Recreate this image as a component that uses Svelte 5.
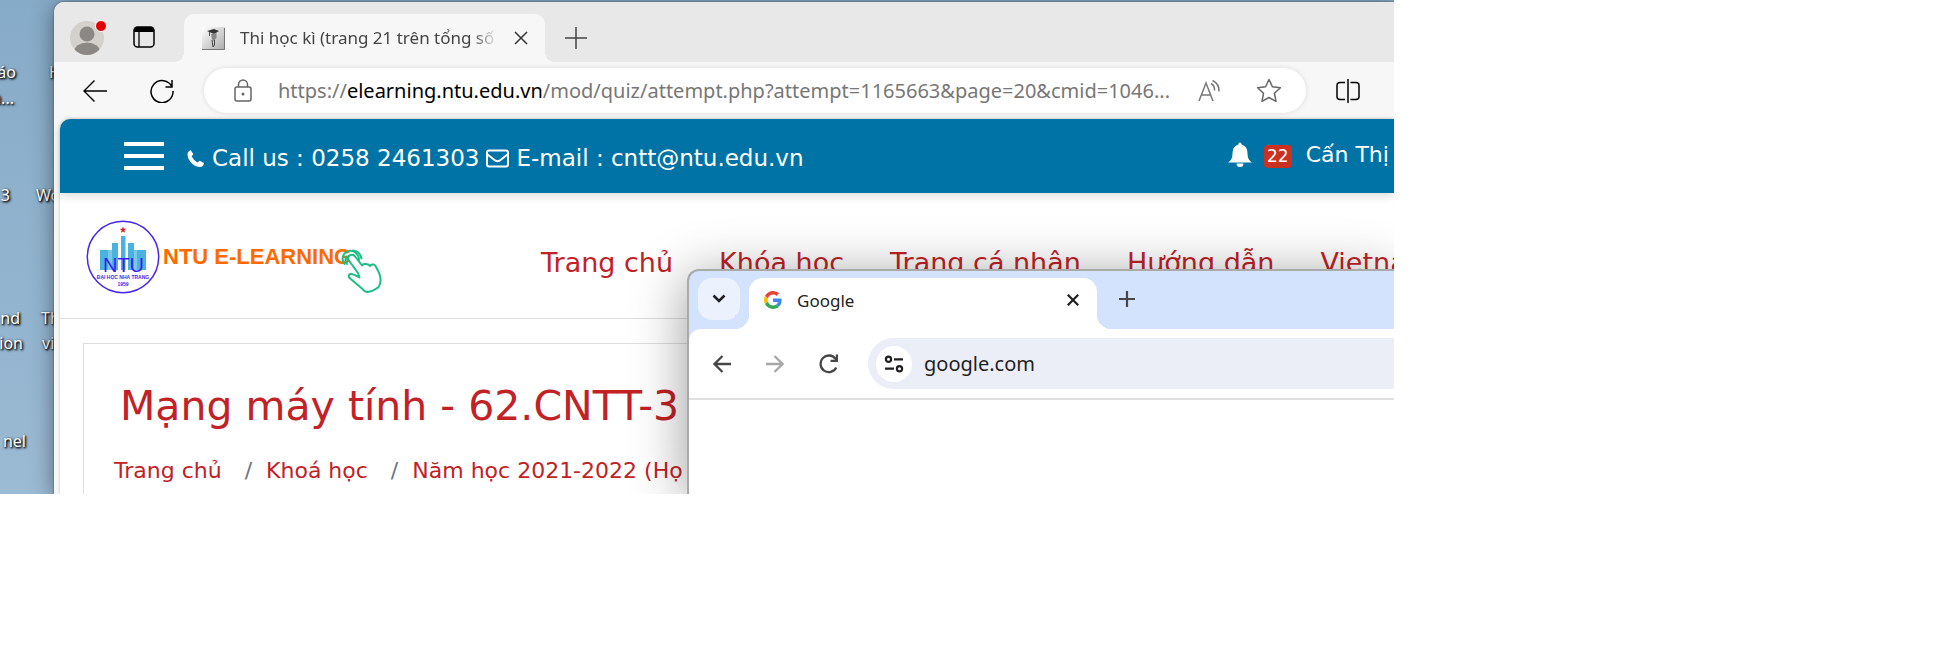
<script>
  const icons = [
    { text: 'áo', right: 16, top: 60 },
    { text: 'n...', right: 14, top: 86 },
    { text: '3', right: 10, top: 183 },
    { text: 'nd', right: 20, top: 306 },
    { text: 'ion', right: 23, top: 331 },
    { text: 'nel', right: 26, top: 429 },
  ];
  const cut = [
    { text: 'H', left: 49, top: 60 },
    { text: 'Wo', left: 36, top: 183 },
    { text: 'Th', left: 41, top: 306 },
    { text: 'vi', left: 42, top: 331 },
  ];
  const nav = ['Trang chủ', 'Khóa học', 'Trang cá nhân', 'Hướng dẫn', 'Vietna'];
  const crumbs = ['Trang chủ', 'Khoá học', 'Năm học 2021-2022 (Họ'];
</script>

<main>
  <div class="desktop">
    {#each icons as i}
      <span class="label ends" style="width:{i.right}px; top:{i.top}px">{i.text}</span>
    {/each}
    {#each cut as i}
      <span class="label" style="left:{i.left}px; top:{i.top}px">{i.text}</span>
    {/each}

    <section class="edge">
      <div class="strip">
        <button class="avatar" aria-label="Profile">
          <svg width="38" height="38" viewBox="0 0 38 38">
            <defs><clipPath id="face"><circle cx="17" cy="21" r="17" /></clipPath></defs>
            <circle cx="17" cy="21" r="17" fill="#d4d1cd" />
            <g clip-path="url(#face)" fill="#8b8784">
              <circle cx="17" cy="17" r="7.5" />
              <ellipse cx="17" cy="35" rx="13" ry="9.5" />
            </g>
            <circle cx="31" cy="9" r="5.5" fill="#e30000" stroke="#fff" />
          </svg>
        </button>
        <button class="spaces" aria-label="Workspaces">
          <svg width="22" height="22" viewBox="0 0 22 22">
            <rect x="1" y="1" width="20" height="20" rx="3.5" fill="none" stroke="#000" stroke-width="1.5" />
            <path d="M1 6V4a3 3 0 0 1 3-3h14a3 3 0 0 1 3 3v2z" />
            <path d="M6 6v15" stroke="#000" stroke-width="1.3" />
          </svg>
        </button>
        <div class="tab">
          <svg width="23" height="23" viewBox="0 0 23 23">
            <defs><linearGradient id="pic" x1="0" y1="0" x2="1" y2="1"><stop offset="0" stop-color="#fff" /><stop offset="1" stop-color="#aaa" /></linearGradient></defs>
            <rect width="23" height="23" rx="1" fill="url(#pic)" />
            <path d="M0 22.5h22.5V1" fill="none" stroke="#777" />
            <path d="M5 4l7-2 5 2-5 3z" fill="#333" />
            <path d="M7.500 5v4" stroke="#555" />
            <path d="M9 7l1 5 1.500 2 3-3V6z" fill="#888" />
            <path d="M10 13l1 7 1.500-2V13" fill="none" stroke="#444" />
          </svg>
          <span class="tabtitle">Thi học kì (trang 21 trên tổng số</span>
          <button class="x" aria-label="Close tab">
            <svg width="14" height="14" viewBox="0 0 14 14"><path d="M1 1l12 12M13 1L1 13" stroke="#333" stroke-width="1.500" /></svg>
          </button>
        </div>
        <button class="plus" aria-label="New tab">
          <svg width="22" height="22" viewBox="0 0 22 22"><path d="M11 0v22M0 11h22" stroke="#444" stroke-width="1.500" /></svg>
        </button>
      </div>

      <div class="tools">
        <button class="back" aria-label="Back">
          <svg width="24" height="24" viewBox="0 0 24 24"><path d="M11.500 1.500L1 12l10.500 10.500M1 12h23" fill="none" stroke="#000" stroke-width="1.400" /></svg>
        </button>
        <button class="reload" aria-label="Refresh">
          <svg width="24" height="24" viewBox="0 0 24 24"><path d="M22 8A11 11 0 1 0 23 12M22 1v7h-6.500" fill="none" stroke="#000" stroke-width="1.500" /></svg>
        </button>
        <div class="address">
          <svg class="lock" width="18" height="24" viewBox="0 0 18 24"><rect x="1" y="8" width="16" height="14" rx="2" fill="none" stroke="#666" stroke-width="1.500" /><path d="M4.500 8V5.500a4.500 4.500 0 0 1 9 0V8" fill="none" stroke="#666" stroke-width="1.500" /><circle cx="9" cy="15" r="1.500" fill="#666" /></svg>
          <a class="url" href="#top">https://<b>elearning.ntu.edu.vn</b>/mod/quiz/attempt.php?attempt=1165663&amp;page=20&amp;cmid=1046...</a>
          <button aria-label="Read aloud">
            <svg width="24" height="24" viewBox="0 0 24 24" fill="none" stroke="#777" stroke-width="1.500"><path d="M1 22L8 4l7 18M3.500 16h9M13 4.500q4 2.500 3.500 7M14.500 1.500q7 3.500 6.500 11" /></svg>
          </button>
          <button class="star" aria-label="Favourite">
            <svg width="26" height="26" viewBox="0 0 26 26"><path d="M13 1.500l3.400 7.300 8 1-5.900 5.500 1.500 8L13 19.500l-7 3.800 1.500-8L1.600 9.800l8-1z" fill="none" stroke="#666" stroke-width="1.500" stroke-linejoin="round" /></svg>
          </button>
        </div>
        <button class="split" aria-label="Split screen">
          <svg width="24" height="24" viewBox="0 0 24 24" fill="none" stroke="#000" stroke-width="1.500"><path d="M9 3.500H4a3 3 0 0 0-3 3v11a3 3 0 0 0 3 3h5M12 0v24M14.500 3.500H20a3 3 0 0 1 3 3v11a3 3 0 0 1-3 3h-5.500" /></svg>
        </button>
      </div>

      <div class="page">
        <div class="bar">
          <button class="burger" aria-label="Menu"><i></i><i></i><i></i></button>
          <div class="contact">
            <svg width="18" height="19" viewBox="0 0 19 19"><path d="M4 .7L6.700 5 4.800 7.200q2 4.300 6.300 6.500L13.300 11.800 18 14.300q-.5 4-4.500 4.200Q7.500 18 3.500 13 .2 9 .5 5 .8 1.500 4 .7z" fill="#fff" /></svg>
            <span>Call us : 0258 2461303</span>
            <svg width="23" height="19" viewBox="0 0 23 19" fill="none" stroke="#fff" stroke-width="2"><rect x="1" y="1.500" width="21" height="16" rx="2" /><path d="M1.500 5.500l8 6.200q2 1.300 4 0l8-6.200" /></svg>
            <span>E-mail : cntt@ntu.edu.vn</span>
          </div>
          <div class="user">
            <svg width="24" height="26" viewBox="0 0 24 26"><path d="M12 .5q1.500 0 1.500 2 6 1.500 6 9 0 6.500 4.500 9H0q4.500-2.500 4.500-9 0-7.500 6-9 0-2 1.500-2zM8.500 21.500h7a3.500 3.500 0 0 1-7 0z" fill="#fff" /></svg>
            <span class="badge">22</span>
            <span class="name">Cấn Thị</span>
          </div>
        </div>

        <header>
          <svg class="logo" width="300" height="76" viewBox="0 0 300 76">
            <circle cx="37" cy="38" r="35.700" fill="#fff" stroke="#4a25ea" stroke-width="1.500" />
            <path d="M37 7.500l.9 2.300h2.300l-1.800 1.600.7 2.400-2.100-1.400-2.100 1.400.7-2.400-1.800-1.600h2.300z" fill="#e02020" />
            <path d="M14 31h8v20h-8zM26 24h6v27h-6zM35 17h4.500v34H35zM42 24h6v27h-6zM51 31h9v20h-9z" fill="#49b2df" />
            <path d="M22 31h4v20h-4zM48 31h3v20h-3z" fill="#7cc8e8" />
            <text x="37.500" y="53" text-anchor="middle" class="mark">NTU</text>
            <text x="37" y="60" text-anchor="middle" class="tiny">ĐẠI HỌC NHA TRANG</text>
            <text x="37" y="67" text-anchor="middle" class="tiny">1959</text>
            <text x="77" y="45" class="word">NTU E-LEARNING</text>
            <g fill="none" stroke="#1bbf83" stroke-width="2" stroke-linecap="round" stroke-linejoin="round">
              <path d="M272 54L262.500 41q-1-4 2-5 3-1 5 2l6.500 8.500q1-2 4-1.500 2.500 0 4 2 1-2 3.500-1.500 2 .5 2.500 2.500 5 8 4.500 14-.5 6-4 7.500-4 3-9 3.500-3 0-5-3L263 58.500q-1-2.500 1.500-3.500 2-.5 9 3.500z" fill="#fff" />
              <path d="M258.500 45q-4-5 0-10.500 5-4.500 10.500-1.500 4 3 4 8M261 45q-3-4 0-7.500" />
              <path d="M267 31.500q7 1 8.500 8" />
            </g>
          </svg>
          <nav>
            {#each nav as n}<a href="#top">{n}</a>{/each}
          </nav>
        </header>

        <div class="card">
          <h1>Mạng máy tính - 62.CNTT-3</h1>
          <ol>
            {#each crumbs as c}<li><a href="#top">{c}</a></li>{/each}
          </ol>
        </div>
      </div>
    </section>

    <section class="chrome">
      <div class="cstrip">
        <button class="search" aria-label="Search tabs">
          <svg width="14" height="10" viewBox="0 0 14 10"><path d="M1.500 1.500L7 7l5.500-5.500" fill="none" stroke="#1f1f1f" stroke-width="2.500" /></svg>
        </button>
        <div class="ctab">
          <svg width="18" height="18" viewBox="0 0 48 48">
            <path fill="#EA4335" d="M24 9.500c3.540 0 6.710 1.220 9.210 3.600l6.850-6.850C35.900 2.380 30.470 0 24 0 14.620 0 6.510 5.380 2.560 13.220l7.980 6.190C12.430 13.720 17.740 9.500 24 9.500z" />
            <path fill="#4285F4" d="M46.980 24.550c0-1.570-.15-3.090-.38-4.550H24v9.020h12.940c-.58 2.960-2.260 5.480-4.780 7.180l7.730 6c4.510-4.180 7.090-10.360 7.090-17.650z" />
            <path fill="#FBBC05" d="M10.530 28.590c-.48-1.450-.76-2.990-.76-4.590s.27-3.140.76-4.590l-7.980-6.190C.92 16.460 0 20.120 0 24c0 3.880.92 7.540 2.560 10.780l7.970-6.190z" />
            <path fill="#34A853" d="M24 48c6.480 0 11.930-2.130 15.890-5.810l-7.730-6c-2.150 1.450-4.920 2.300-8.160 2.300-6.260 0-11.570-4.220-13.470-9.910l-7.980 6.190C6.510 42.620 14.620 48 24 48z" />
          </svg>
          <span>Google</span>
          <button aria-label="Close tab">
            <svg width="12" height="12" viewBox="0 0 12 12"><path d="M.7.7l10.600 10.600M11.300.7L.7 11.300" stroke="#1f1f1f" stroke-width="2.200" /></svg>
          </button>
        </div>
        <button class="cplus" aria-label="New tab">
          <svg width="16" height="16" viewBox="0 0 16 16"><path d="M8 0v16M0 8h16" stroke="#474747" stroke-width="2.200" /></svg>
        </button>
      </div>
      <div class="cbody">
        <div class="ctools">
          <button aria-label="Back"><svg width="18" height="18" viewBox="0 0 18 18"><path d="M9.500 1L1.500 9l8 8M1.500 9H18" fill="none" stroke="#474747" stroke-width="2.300" /></svg></button>
          <button aria-label="Forward"><svg width="18" height="18" viewBox="0 0 18 18"><path d="M8.500 1l8 8-8 8M16.500 9H0" fill="none" stroke="#a8a8a8" stroke-width="2.300" /></svg></button>
          <button aria-label="Reload"><svg width="20" height="20" viewBox="0 0 20 20"><path d="M17.300 13.500A8.300 8.300 0 1 1 16.500 4.800L18 7" fill="none" stroke="#474747" stroke-width="2.300" /><path d="M19 .5V8h-7.500V5.800h5.300V.5z" fill="#474747" /></svg></button>
          <div class="omni">
            <button class="site" aria-label="Site information">
              <svg width="20" height="18" viewBox="0 0 20 18" fill="none" stroke="#1f1f1f" stroke-width="2.200"><circle cx="4.500" cy="4.300" r="2.600" /><path d="M10 4.300h9M1 13.700h9" /><circle cx="15.500" cy="13.700" r="2.600" /></svg>
            </button>
            <input aria-label="Address" value="google.com" />
          </div>
        </div>
      </div>
    </section>
  </div>
</main>

<style>
  :global(body) { margin: 0; background: #fff; }
  main { display: grid; grid-template-columns: minmax(0, 1394fr) 549fr; }
  button { border: 0; padding: 0; background: none; display: flex; align-items: center; justify-content: center; flex: none; }
  svg { display: block; flex: none; }
  a { color: inherit; text-decoration: none; }
  .desktop { position: relative; overflow: hidden; background: linear-gradient(#86abc8, #9bbad3); padding: 2px 0 0 54px; font-family: "Noto Sans", sans-serif; }
  .label { position: absolute; color: #fff; font-size: 16px; line-height: 24px; white-space: nowrap; text-shadow: 1px 1px 2px #000, 1px 1px 3px #000; }
  .ends { left: 0; display: flex; justify-content: flex-end; }

  .edge { position: relative; background: #f7f7f7; border-top-left-radius: 10px; box-shadow: 0 0 2px #444, 0 4px 22px rgba(0, 0, 0, .45); }
  .strip { display: flex; height: 60px; background: #e8e8e8; border-top-left-radius: 10px; }
  .avatar { margin: 12px 0 0 16px; align-self: flex-start; }
  .avatar, .spaces { height: 44px; }
  .spaces { margin: 13px 0 0 25px; }
  .tab { position: relative; display: flex; align-items: center; box-sizing: border-box; width: 361px; margin: 12px 0 0 29px; padding: 0 17px 0 18px; background: #f7f7f7; border-radius: 10px 10px 0 0; }
  .tab::before, .tab::after, .ctab::before, .ctab::after { content: ""; position: absolute; bottom: 0; width: 10px; height: 10px; }
  .tab::before { left: -10px; background: radial-gradient(circle at 0 0, #e8e8e8 10px, #f7f7f7 10px); }
  .tab::after { right: -10px; background: radial-gradient(circle at 100% 0, #e8e8e8 10px, #f7f7f7 10px); }
  .tabtitle { flex: 1; min-width: 0; margin: 0 16px 0 15px; overflow: hidden; white-space: nowrap; font-size: 17px; line-height: 24px; color: #444; mask-image: linear-gradient(90deg, #000 90%, transparent); }
  .plus { margin: 11px 0 0 20px; }

  .tools { display: flex; align-items: center; height: 45px; padding: 6px 34px 6px 29px; }
  .reload { margin-left: 43px; }
  .address { flex: 1; min-width: 0; display: flex; align-items: center; height: 45px; box-sizing: border-box; margin: 0 30px; padding: 0 24px 0 30px; background: #fff; border-radius: 23px; box-shadow: 0 0 5px rgba(0, 0, 0, .12); }
  .url { flex: 1; min-width: 0; margin-left: 26px; overflow: hidden; white-space: nowrap; font-size: 20px; line-height: 30px; color: #777; }
  .url b { font-weight: 400; color: #000; }
  .star { margin-left: 34px; }

  .page { margin-left: 6px; background: #fff; border-top-left-radius: 10px; font-family: "DejaVu Sans", Verdana, sans-serif; box-shadow: 0 0 3px rgba(0, 0, 0, .25); }
  .bar { position: relative; display: flex; align-items: center; height: 74px; padding-left: 64px; background: #0073a6; color: #fff; border-top-left-radius: 10px; box-shadow: 0 3px 9px rgba(0, 0, 0, .14); font-size: 22px; line-height: 28px; white-space: nowrap; }
  .burger { flex-direction: column; gap: 8px; }
  .burger i { width: 40px; height: 4px; background: #fff; }
  .contact { display: flex; align-items: center; gap: 7px; margin-left: 23px; padding-top: 4px; font-size: 23px; }
  .user { display: flex; align-items: center; margin-left: auto; width: 166px; padding-bottom: 2px; overflow: hidden; }
  .badge { margin: 2px 14px 0 12px; padding: 0 3px; border-radius: 4px; background: #ca3120; font-size: 17px; line-height: 23px; }

  header { display: flex; height: 126px; border-bottom: 1px solid #dedede; box-sizing: border-box; overflow: hidden; }
  .logo { margin: 26px 0 0 26px; }
  .mark { font: 20px "Liberation Sans", sans-serif; fill: #3a1df0; }
  .tiny { font: bold 5px "Liberation Sans", sans-serif; fill: #4a25ea; }
  .word { font: bold 22px "Liberation Sans", sans-serif; fill: #ff6a00; }
  nav { display: flex; gap: 46px; margin-left: 155px; padding-top: 54px; color: #c22126; font-size: 27px; line-height: 32px; white-space: nowrap; }

  .card { margin: 24px 0 0 23px; border: solid #dedede; border-width: 1px 0 0 1px; color: #c22126; overflow: hidden; white-space: nowrap; }
  h1 { margin: 36px 0 0 36px; font-size: 41px; line-height: 52px; font-weight: 400; }
  ol { display: flex; list-style: none; margin: 25px 0 0; padding: 0 0 10px 30px; font-size: 22px; line-height: 27px; }
  li + li::before { content: "/"; color: #6c757d; margin: 0 14px 0 23px; }

  .chrome { position: absolute; display: flex; flex-direction: column; left: 687px; right: 0; top: 269px; bottom: 0; background: #d3e3fd; border: solid #aaa; border-width: 2px 0 0 2px; border-top-left-radius: 12px; box-shadow: 0 8px 54px rgba(0, 0, 0, .4); }
  .cstrip { display: flex; height: 58px; }
  .cbody { flex: 1; background: #fff; border-top-left-radius: 12px; }
  .search { width: 42px; height: 42px; margin: 7px 0 0 9px; border-radius: 14px; background: #ebf2fe; }
  .ctab { position: relative; display: flex; align-items: center; box-sizing: border-box; width: 348px; margin: 7px 0 0 9px; padding: 0 18px 8px 15px; background: #fff; border-radius: 14px 14px 0 0; font-size: 17px; line-height: 24px; color: #1f1f1f; }
  .ctab span { flex: 1; margin-left: 15px; padding-top: 2px; }
  .ctab::before, .ctab::after { width: 14px; height: 14px; }
  .ctab::before { left: -14px; background: radial-gradient(circle at 0 0, #d3e3fd 14px, #fff 14px); }
  .ctab::after { right: -14px; background: radial-gradient(circle at 100% 0, #d3e3fd 14px, #fff 14px); }
  .cplus { margin: 0 0 2px 22px; }
  .ctools { display: flex; align-items: center; gap: 35px; height: 69px; padding-left: 24px; border-bottom: 2px solid #e0e0e0; }
  .omni { flex: 1; min-width: 0; display: flex; align-items: center; height: 51px; margin-left: -6px; padding-left: 8px; background: #ebeef7; border-radius: 26px 0 0 26px; }
  .site { width: 36px; height: 36px; border-radius: 50%; background: #fff; }
  input { flex: 1; min-width: 0; margin-left: 12px; padding: 0; border: 0; outline: 0; background: none; font: 20px/30px "Noto Sans", sans-serif; color: #1f1f1f; }
</style>
